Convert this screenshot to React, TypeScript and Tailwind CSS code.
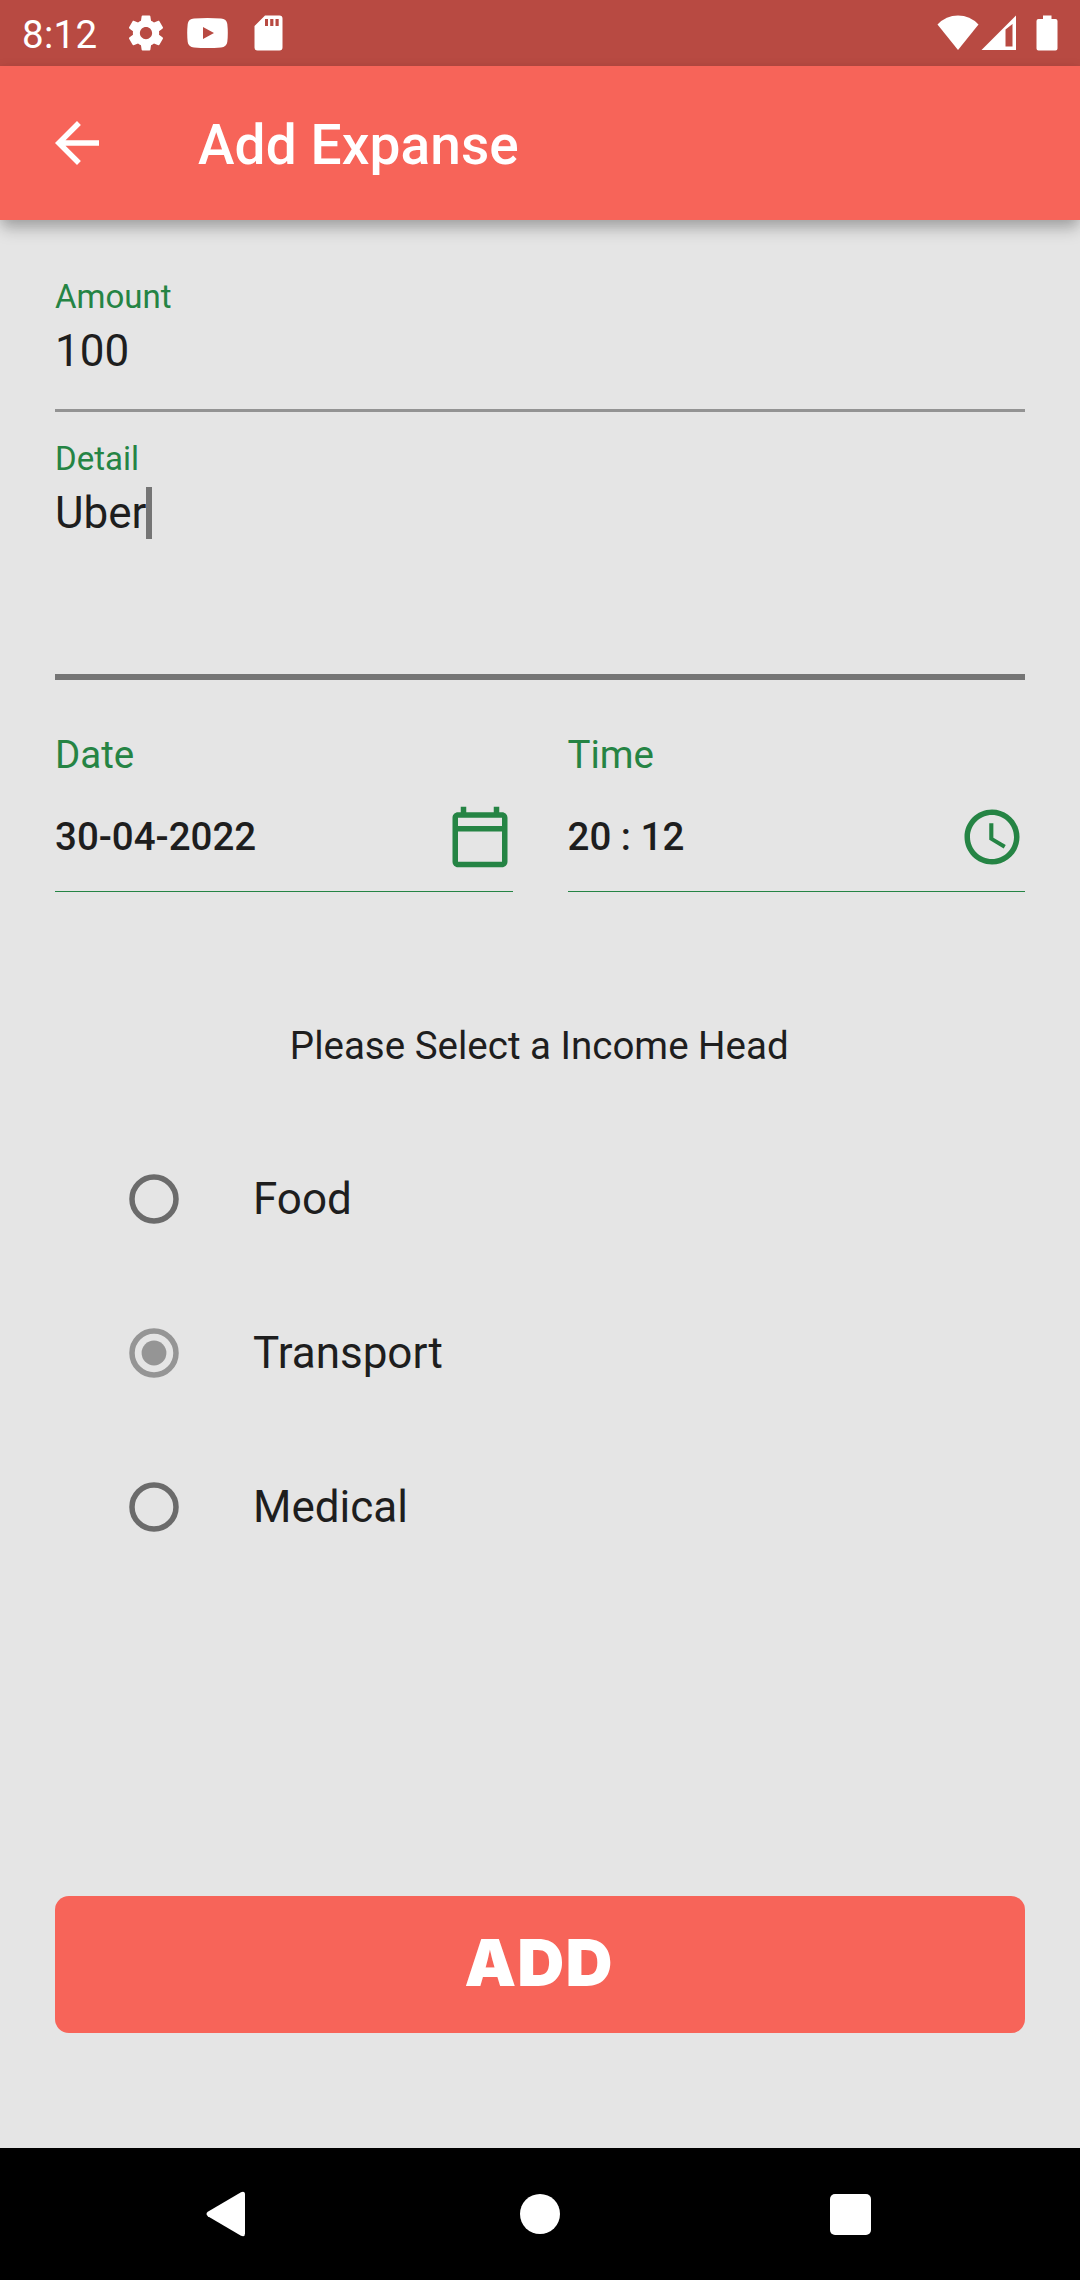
import type { ReactNode } from "react";

function StatusBar() {
  return (
    <div className="flex h-[66px] items-center bg-[#b84a42] pl-[22px] text-white">
      <span className="w-[76px] pt-[3px] text-[38.5px] leading-[46px] tracking-[0.3px] whitespace-nowrap">8:12</span>
      <svg className="ml-[27px] size-[42px]" viewBox="0 0 24 24" fill="currentColor">
        <path d="M19.43 12.98c.04-.32.07-.64.07-.98s-.03-.66-.07-.98l2.11-1.65c.19-.15.24-.42.12-.64l-2-3.46c-.12-.22-.39-.3-.61-.22l-2.49 1c-.52-.4-1.08-.73-1.69-.98l-.38-2.65C14.46 2.18 14.25 2 14 2h-4c-.25 0-.46.18-.49.42l-.38 2.65c-.61.25-1.17.59-1.69.98l-2.49-1c-.23-.09-.49 0-.61.22l-2 3.46c-.13.22-.07.49.12.64l2.11 1.65c-.04.32-.07.65-.07.98s.03.66.07.98l-2.11 1.65c-.19.15-.24.42-.12.64l2 3.46c.12.22.39.3.61.22l2.49-1c.52.4 1.08.73 1.69.98l.38 2.65c.03.24.24.42.49.42h4c.25 0 .46-.18.49-.42l.38-2.65c.61-.25 1.17-.59 1.69-.98l2.49 1c.23.09.49 0 .61-.22l2-3.46c.12-.22.07-.49-.12-.64l-2.11-1.65zM12 15.5c-1.93 0-3.5-1.57-3.5-3.5s1.57-3.5 3.5-3.5 3.5 1.57 3.5 3.5-1.57 3.5-3.5 3.5z" />
      </svg>
      <svg className="ml-[20px] h-[30px] w-[41px]" viewBox="0 0 41 30" fill="currentColor">
        <path fillRule="evenodd" d="M7 .6Q20.5-.6 34 .6Q39.6 1 40.3 6Q41.3 15 40.3 24Q39.6 29 34 29.4Q20.5 30.6 7 29.4Q1.4 29 .7 24Q-.3 15 .7 6Q1.4 1 7 .6ZM16 9V21L27 15Z" />
      </svg>
      <svg className="ml-[26px] h-[36px] w-[29px]" viewBox="0 0 29 36" fill="currentColor">
        <path fillRule="evenodd" d="M11 .5H25.5Q28.5 .5 28.5 3.5V32.5Q28.5 35.5 25.5 35.5H3.5Q.5 35.5 .5 32.5V11ZM11 4V11H14V4ZM16.2 4V11H19.4V4ZM21.5 4V11H24.7V4Z" />
      </svg>
      <div className="ml-auto flex items-center pr-[22px]">
        <svg className="h-[36px] w-[42px]" viewBox="0 0 42 36" fill="currentColor">
          <path d="M.5 9.500Q9 .5 21 .5T41.500 9.500L21 35Z" />
        </svg>
        <svg className="ml-[2px] h-[36px] w-[36px]" viewBox="0 0 36 36" fill="currentColor">
          <path fillRule="evenodd" d="M.5 35H35V.5ZM24.500 14.500L31.500 9V31.500H24.500Z" />
        </svg>
        <svg className="ml-[19px] h-[36px] w-[22px]" viewBox="0 0 22 36" fill="currentColor">
          <path d="M7 .5H15.500V4H19.500Q21.500 4 21.500 6V33.500Q21.500 35.500 19.500 35.500H2.500Q.5 35.500 .5 33.500V6Q.5 4 2.500 4H7Z" />
        </svg>
      </div>
    </div>
  );
}

function AppBar() {
  return (
    <header className="relative z-10 flex h-[154px] items-center bg-[#f76459] pl-[44px] text-white shadow-[0_11px_15px_-2px_rgba(0,0,0,0.22),0_3px_12px_0_rgba(0,0,0,0.12)]">
      <svg className="size-[66px]" viewBox="0 0 24 24" fill="currentColor">
        <path d="M20 11H7.830l5.590-5.590L12 4l-8 8 8 8 1.410-1.410L7.830 13H20v-2z" />
      </svg>
      <h1 className="ml-[88px] pt-[4px] text-[55px] leading-[64px] font-medium tracking-[0.1px]">Add Expanse</h1>
    </header>
  );
}

function PickerField({ label, value, icon }: { label: string; value: string; icon: ReactNode }) {
  return (
    <div className="flex-1 border-b border-[#258444] pb-[21px]">
      <div className="text-[38.5px] leading-[46px] text-[#258444]">{label}</div>
      <div className="mt-[26px] flex h-[66px] items-center justify-between">
        <span className="text-[38.5px] leading-[46px] font-medium">{value}</span>
        {icon}
      </div>
    </div>
  );
}

function RadioRow({ label, selected = false }: { label: string; selected?: boolean }) {
  return (
    <div className="flex h-[154px] items-center pl-[74px]">
      <svg className="size-[50px]" viewBox="0 0 50 50">
        <circle cx="25" cy="25" r="22" fill="none" stroke={selected ? "#959595" : "#6b6b6b"} strokeWidth="5.5" />
        {selected && <circle cx="25" cy="25" r="12.4" fill="#959595" />}
      </svg>
      <span className="ml-[74px] text-[44px] leading-[52px]">{label}</span>
    </div>
  );
}

export default function App() {
  return (
    <div className="flex h-[2280px] w-[1080px] flex-col overflow-hidden bg-[#e5e5e5] font-['Roboto',sans-serif] text-[#1e1e1e]">
      <StatusBar />
      <AppBar />
      <main className="flex flex-1 flex-col px-[55px] pt-[57px]">
        <div className="h-[135px] border-b-[3px] border-[#939393]">
          <div className="text-[33px] leading-[40px] text-[#258444]">Amount</div>
          <div className="mt-[8px] text-[44px] leading-[52px]">100</div>
        </div>
        <div className="mt-[27px] h-[241px] border-b-[6px] border-[#757575]">
          <div className="text-[33px] leading-[40px] text-[#258444]">Detail</div>
          <div className="mt-[8px] flex text-[44px] leading-[52px]">
            Uber
            <span className="h-[52px] w-[5.5px] bg-[#757575]" />
          </div>
        </div>
        <div className="mt-[52px] flex gap-[55px]">
          <PickerField
            label="Date"
            value="30-04-2022"
            icon={
              <svg className="size-[66px]" viewBox="0 0 24 24" fill="#258444">
                <path d="M20 3h-1V1h-2v2H7V1H5v2H4c-1.100 0-2 .9-2 2v16c0 1.100.9 2 2 2h16c1.100 0 2-.9 2-2V5c0-1.100-.9-2-2-2zm0 18H4V10h16v11zm0-13H4V5h16v3z" />
              </svg>
            }
          />
          <PickerField
            label="Time"
            value="20 : 12"
            icon={
              <svg className="size-[66px]" viewBox="0 0 24 24" fill="#258444">
                <path d="M11.990 2C6.470 2 2 6.480 2 12s4.470 10 9.990 10C17.520 22 22 17.520 22 12S17.520 2 11.990 2zM12 20c-4.420 0-8-3.580-8-8s3.580-8 8-8 8 3.580 8 8-3.580 8-8 8zm.5-13H11v6l5.250 3.150.75-1.230-4.500-2.670V7z" />
              </svg>
            }
          />
        </div>
        <p className="mt-[131px] pr-[1.5px] text-center text-[38.5px] leading-[46px]">Please Select a Income Head</p>
        <div className="mt-[53px]">
          <RadioRow label="Food" />
          <RadioRow label="Transport" selected />
          <RadioRow label="Medical" />
        </div>
        <button className="mt-auto mb-[115px] h-[137.5px] rounded-[14px] bg-[#f76459] pb-[3px] pr-[2px] font-['Inter',sans-serif] text-[65px] leading-[78px] font-black tracking-[1.2px] text-white">
          ADD
        </button>
      </main>
      <nav className="flex h-[132px] items-center bg-black">
        <svg className="ml-[206px] h-[46px] w-[40px]" viewBox="0 0 40 46" fill="white">
          <path d="M35 1.200Q39 -.3 39 3.500V42.500Q39 46.300 35 44.800L1.800 25.200Q-.8 23 1.800 20.800Z" />
        </svg>
        <div className="ml-[274px] size-[40px] rounded-full bg-white" />
        <div className="ml-[270px] size-[41px] rounded-[5px] bg-white" />
      </nav>
    </div>
  );
}
